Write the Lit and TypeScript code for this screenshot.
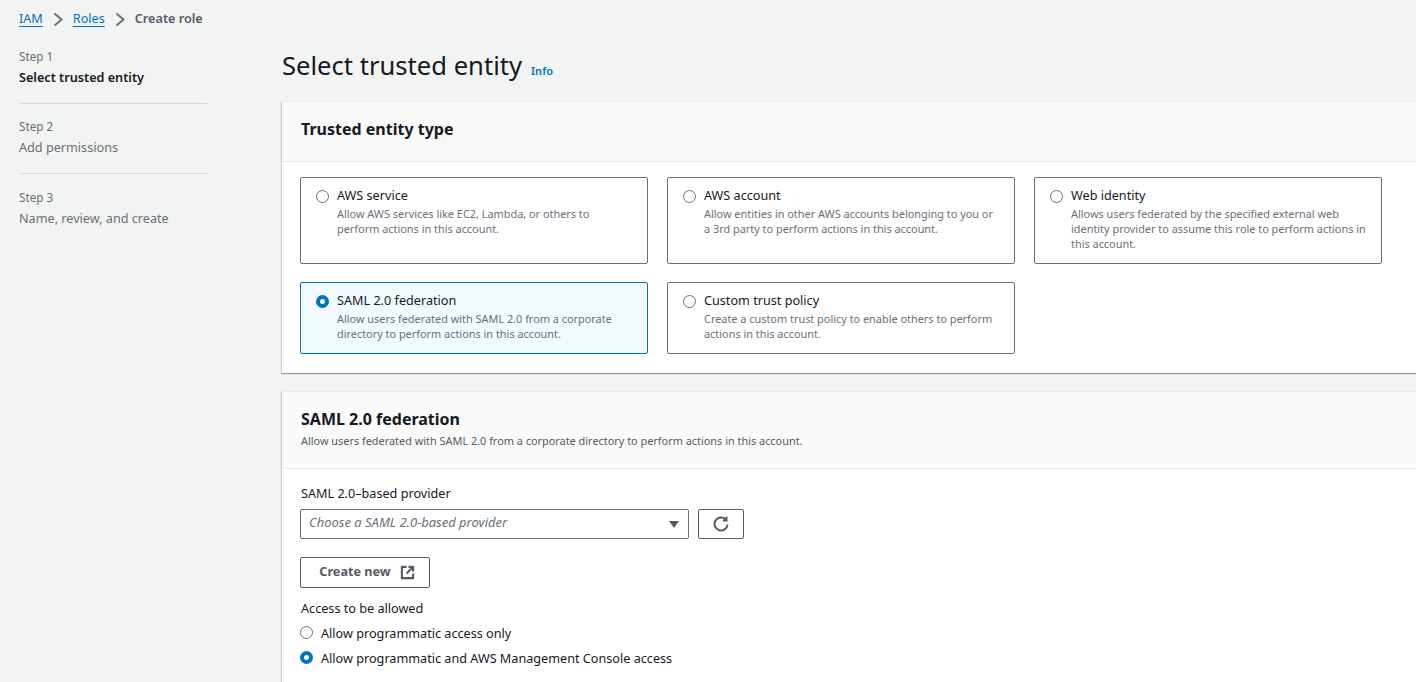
import { LitElement, html, css, svg } from 'lit';
import { customElement } from 'lit/decorators.js';

const TILES = [
  { title: 'AWS service', desc: 'Allow AWS services like EC2, Lambda, or others to perform actions in this account.' },
  { title: 'AWS account', desc: 'Allow entities in other AWS accounts belonging to you or a 3rd party to perform actions in this account.' },
  { title: 'Web identity', desc: 'Allows users federated by the specified external web identity provider to assume this role to perform actions in this account.' },
  { title: 'SAML 2.0 federation', desc: 'Allow users federated with SAML 2.0 from a corporate directory to perform actions in this account.', selected: true },
  { title: 'Custom trust policy', desc: 'Create a custom trust policy to enable others to perform actions in this account.' },
];

const STEPS = [
  { step: 'Step 1', name: 'Select trusted entity', active: true },
  { step: 'Step 2', name: 'Add permissions' },
  { step: 'Step 3', name: 'Name, review, and create' },
];

const chevron = svg`<path d="M6.5 3.5l7 6-7 6" fill="none" stroke="#687078" stroke-width="2"/>`;

@customElement('app-root')
export class AppRoot extends LitElement {
  static styles = css`
    :host {
      display: block;
      height: 682px;
      overflow: hidden;
      background: #f2f3f3;
      color: #16191f;
      font-family: 'Noto Sans', sans-serif;
      font-size: 12.65px;
      line-height: 20px;
    }
    .crumbs {
      display: flex;
      align-items: center;
      padding: 8px 0 0 19px;
      height: 20px;
      color: #545b64;
    }
    .crumbs a { color: #0073bb; text-decoration: underline; text-underline-offset: 3px; }
    .crumbs b { font-weight: 600; }
    .crumbs svg { width: 16px; height: 16px; display: block; margin: 0 9px 0 5px; }
    .layout {
      display: grid;
      grid-template-columns: 188px 1fr;
      column-gap: 75px;
      padding: 11px 0 0 19px;
    }
    .step { padding: 7px 0 16px; border-bottom: 1px solid #d5dbdb; margin-bottom: 5.4px; }
    .step:last-child { border: 0; }
    .step small { display: block; font-size: 11.7px; line-height: 20px; color: #687078; margin-bottom: 1px; }
    .step span { color: #687078; }
    .step.active span { color: #16191f; font-weight: 600; }
    .main { width: 1200px; }
    .title { display: flex; align-items: baseline; gap: 9px; height: 62px; }
    h1 { margin: 0; font-size: 25.6px; font-weight: 400; line-height: 36px; padding-top: 9px; }
    .title a { color: #0073bb; font-size: 11px; font-weight: 600; }
    .card {
      background: #fff;
      border-top: 1px solid #eaeded;
      box-shadow: 0 1px 1px 0 rgba(0, 28, 36, 0.3), -1px 1px 1px 0 rgba(0, 28, 36, 0.15);
      margin-bottom: 18px;
    }
    .card header {
      background: #fafafa;
      border-bottom: 1px solid #eaeded;
      padding: 14px 19px 20px;
    }
    h2 { margin: 0; font-size: 16px; font-weight: 700; line-height: 26px; }
    .one header { height: 25px; }
    .card header p { margin: 2px 0 0; font-size: 10.9px; line-height: 14px; color: #545b64; }
    .tiles {
      display: grid;
      grid-template-columns: repeat(3, 348px);
      gap: 18px 19px;
      padding: 15px 18px 19px;
    }
    .tile {
      display: flex;
      gap: 8px;
      box-sizing: border-box;
      min-height: 72px;
      padding: 7px 14px 8px 15px;
      background: #fff;
      border: 1px solid #687078;
      border-radius: 2px;
    }
    .tile.on { background: #f1faff; border-color: #0073bb; }
    .tile:nth-child(-n + 3) { height: 87px; }
    .tile .t { display: block; }
    .tile .d { display: block; font-size: 10.9px; line-height: 15px; color: #687078; margin-top: 1px; }
    .radio {
      flex: none;
      box-sizing: border-box;
      width: 13px;
      height: 13px;
      margin-top: 5px;
      border: 1.5px solid #687078;
      border-radius: 50%;
      background: #fff;
    }
    .radio.on { border: 4px solid #0073bb; }
    .form { padding: 14px 19px 0 18px; height: 220px; }
    .label { display: block; line-height: 20px; margin-bottom: 6px; padding-left: 1px; }
    .row { display: flex; gap: 9px; }
    .select {
      box-sizing: border-box;
      display: flex;
      align-items: center;
      justify-content: space-between;
      width: 389px;
      height: 30px;
      padding: 0 9px 4px 8px;
      background: #fff;
      border: 1px solid #687078;
      border-radius: 2px;
      font-size: 13px;
      font-style: italic;
      color: #687078;
    }
    .caret { width: 0; height: 0; border: 5px solid transparent; border-top: 7px solid #545b64; border-bottom: 0; margin-top: 4px; }
    .btn {
      box-sizing: border-box;
      display: flex;
      align-items: center;
      justify-content: center;
      gap: 9px;
      height: 30px;
      background: #fff;
      border: 1px solid #545b64;
      border-radius: 2px;
      color: #545b64;
      font-weight: 700;
    }
    .btn svg { width: 16px; height: 16px; display: block; }
    .refresh { width: 46px; }
    .create { width: 130px; height: 31px; margin: 18px 0 10px; padding: 0 0 3px 4px; }
    .create svg { width: 15px; height: 15px; margin-top: 2px; }
    .opt { display: flex; align-items: center; gap: 8px; height: 25px; }
    .opt .radio { margin: 0; }
    .form .label.access { margin-bottom: 2px; }
  `;

  render() {
    return html`
      <nav class="crumbs">
        <a>IAM</a>
        <svg viewBox="0 0 16 16">${chevron}</svg>
        <a>Roles</a>
        <svg viewBox="0 0 16 16">${chevron}</svg>
        <b>Create role</b>
      </nav>
      <div class="layout">
        <div>
          ${STEPS.map(s => html`
            <div class="step ${s.active ? 'active' : ''}">
              <small>${s.step}</small>
              <span>${s.name}</span>
            </div>
          `)}
        </div>
        <div class="main">
          <div class="title">
            <h1>Select trusted entity</h1>
            <a>Info</a>
          </div>
          <section class="card one">
            <header><h2>Trusted entity type</h2></header>
            <div class="tiles">
              ${TILES.map(t => html`
                <div class="tile ${t.selected ? 'on' : ''}">
                  <i class="radio ${t.selected ? 'on' : ''}"></i>
                  <div>
                    <span class="t">${t.title}</span>
                    <span class="d">${t.desc}</span>
                  </div>
                </div>
              `)}
            </div>
          </section>
          <section class="card">
            <header>
              <h2>SAML 2.0 federation</h2>
              <p>Allow users federated with SAML 2.0 from a corporate directory to perform actions in this account.</p>
            </header>
            <div class="form">
              <span class="label">SAML 2.0–based provider</span>
              <div class="row">
                <div class="select">Choose a SAML 2.0-based provider<i class="caret"></i></div>
                <div class="btn refresh">
                  <svg viewBox="0 0 16 16"><path d="M14.5 8.5a6.5 6.5 0 1 1-2.2-5.4M13.5 .8v3.6H9.9" fill="none" stroke="#545b64" stroke-width="2"/></svg>
                </div>
              </div>
              <div class="btn create">
                Create new
                <svg viewBox="0 0 16 16"><path d="M7 2H2v12h12V9M9 2h5v5M14 2L7 9" fill="none" stroke="#545b64" stroke-width="2.2"/></svg>
              </div>
              <span class="label access">Access to be allowed</span>
              <div class="opt"><i class="radio"></i>Allow programmatic access only</div>
              <div class="opt"><i class="radio on"></i>Allow programmatic and AWS Management Console access</div>
            </div>
          </section>
        </div>
      </div>
    `;
  }
}
